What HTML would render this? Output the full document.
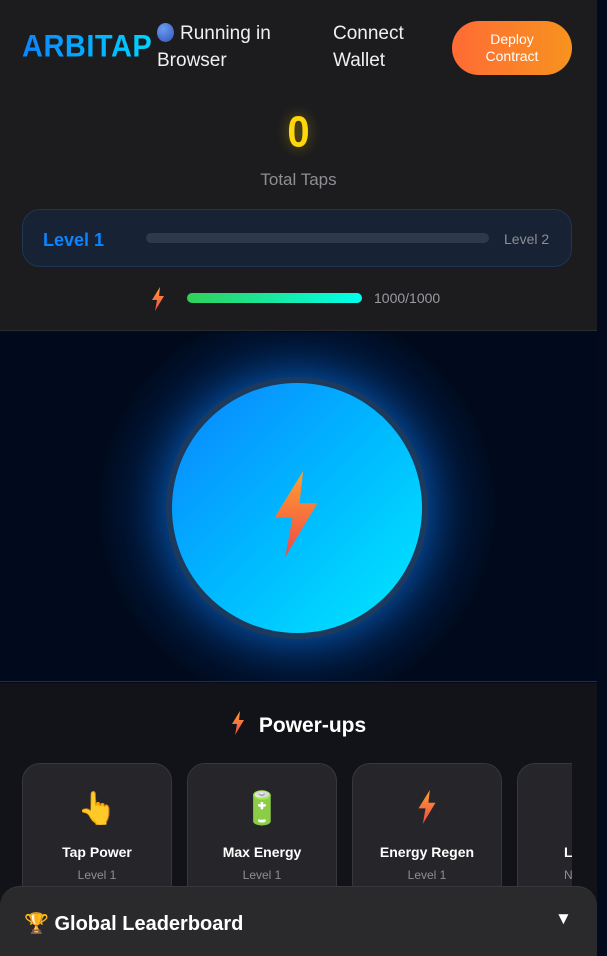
<!DOCTYPE html>
<html><head><style>
*{margin:0;padding:0;box-sizing:border-box}
body{width:607px;height:956px;overflow:hidden;background:#020a1c;font-family:"Liberation Sans","DejaVu Sans",sans-serif;color:#fff;position:relative}
.top{position:absolute;left:0;top:0;width:597px;height:331px;background:#1c1c1e;border-bottom:1px solid #2c2c30}
.logo{position:absolute;left:22px;top:29px;font-size:29px;font-weight:900;letter-spacing:0.5px;background:linear-gradient(90deg,#0a84ff,#00d4ff);-webkit-background-clip:text;color:transparent;transform:scaleY(1.1);transform-origin:left top}
.run{position:absolute;left:157px;top:20px;font-size:19px;line-height:27px;width:150px;color:#f0f0f0}
.dot{display:inline-block;width:17px;height:19px;border-radius:50%;background:radial-gradient(circle at 35% 30%,#6a9cf0,#3355bb);vertical-align:-3px;margin-right:6px}
.cw{position:absolute;left:333px;top:20px;font-size:19px;line-height:27px;color:#f0f0f0}
.dep{position:absolute;left:452px;top:21px;width:120px;height:54px;border-radius:27px;background:linear-gradient(90deg,#ff6b35,#f7931e);font-size:14px;line-height:17px;text-align:center;padding-top:10px}
.zero{position:absolute;left:0;width:597px;top:110px;text-align:center;font-size:40px;font-weight:900;color:#ffd60a;text-shadow:0 0 12px rgba(255,214,10,.4);transform:scaleY(1.1)}
.tt{position:absolute;left:0;width:597px;top:170px;text-align:center;font-size:17px;color:#8e8e93}
.lvl{position:absolute;left:22px;top:209px;width:550px;height:58px;border-radius:18px;background:#172234;border:1px solid #1e3556}
.lvl .a{position:absolute;left:20px;top:20px;font-size:18px;font-weight:bold;color:#0a84ff}
.lvl .bar{position:absolute;left:123px;top:23px;width:343px;height:10px;border-radius:5px;background:#2e3a4c}
.lvl .b{position:absolute;left:481px;top:21px;font-size:14px;color:#8e8e93}
.en{position:absolute;left:187px;top:293px;width:175px;height:10px;border-radius:5px;background:linear-gradient(90deg,#30d158,#00ffee)}
.ent{position:absolute;left:374px;top:290px;font-size:14px;color:#9a9aa0}
.mid{position:absolute;left:0;top:332px;width:597px;height:350px;background:radial-gradient(circle at 297px 175px,rgba(10,132,255,.5) 0,rgba(10,100,220,.22) 140px,rgba(0,10,30,0) 200px),#000a1c;border-bottom:1px solid #2a2d35}
.ring{position:absolute;left:166px;top:45px;width:262px;height:262px;border-radius:50%;background:#1b3a5e;box-shadow:0 0 40px rgba(10,132,255,.55)}
.btn{position:absolute;left:6px;top:6px;width:250px;height:250px;border-radius:50%;background:linear-gradient(135deg,#0a84ff 0%,#00b8ff 50%,#00eaff 100%)}
.pu{position:absolute;left:0;top:683px;width:597px;height:273px;background:#111318}
.put{position:absolute;left:0;width:597px;top:28px;text-align:center;font-size:21px;font-weight:bold}
.card{position:absolute;top:80px;width:150px;height:140px;border-radius:18px;background:#26262a;border:1px solid #38383c;text-align:center}
.card .i{position:absolute;left:0;width:100%;top:26px;font-size:32px;line-height:36px}
.card .n{position:absolute;left:0;width:100%;top:80px;font-size:14px;font-weight:bold}
.card .l{position:absolute;left:0;width:100%;top:104px;font-size:12px;color:#8e8e93}
.lb{position:absolute;left:0;top:886px;width:597px;height:70px;border-radius:20px 20px 0 0;background:#2a2a2d;border-top:1px solid #38383c}
.lb .t{position:absolute;left:24px;top:24px;font-size:20px;font-weight:bold}
.lb .v{position:absolute;left:555px;top:22px;font-size:17px}
.sb{position:absolute;left:597px;top:0;width:10px;height:956px;background:#020a1c}
</style></head><body>
<svg width="0" height="0" style="position:absolute"><defs><linearGradient id="bg" x1="0" y1="0" x2="0" y2="1"><stop offset="0" stop-color="#ffa030"/><stop offset="1" stop-color="#f04848"/></linearGradient></defs></svg>
<div class="top">
<div class="logo">ARBITAP</div>
<div class="run"><span class="dot"></span>Running in Browser</div>
<div class="cw">Connect<br>Wallet</div>
<div class="dep">Deploy<br>Contract</div>
<div class="zero">0</div>
<div class="tt">Total Taps</div>
<div class="lvl"><div class="a">Level 1</div><div class="bar"></div><div class="b">Level 2</div></div>
<svg style="position:absolute;left:151px;top:287px" width="14" height="24" viewBox="0 0 14 24"><path d="M9 0 L1 13 H6 L4 24 L13 9 H8 Z" fill="url(#bg)"/></svg>
<div class="en"></div><div class="ent">1000/1000</div>
</div>
<div class="mid"><div class="ring"><div class="btn">
<svg style="position:absolute;left:99px;top:88px" width="50" height="86" viewBox="0 0 14 24"><path d="M9 0 L1 13 H6 L4 24 L13 9 H8 Z" fill="url(#bg)"/></svg>
</div></div></div>
<div class="pu">
<div class="put"><svg style="vertical-align:-3px;margin-right:14px" width="14" height="24" viewBox="0 0 14 24"><path d="M9 0 L1 13 H6 L4 24 L13 9 H8 Z" fill="url(#bg)"/></svg>Power-ups</div>
<div class="card" style="left:22px"><div class="i">👆</div><div class="n">Tap Power</div><div class="l">Level 1</div></div>
<div class="card" style="left:187px"><div class="i">🔋</div><div class="n">Max Energy</div><div class="l">Level 1</div></div>
<div class="card" style="left:352px"><div class="i"><svg width="20" height="34" viewBox="0 0 14 24"><path d="M9 0 L1 13 H6 L4 24 L13 9 H8 Z" fill="url(#bg)"/></svg></div><div class="n">Energy Regen</div><div class="l">Level 1</div></div>
<div style="position:absolute;left:517px;top:80px;width:55px;height:140px;overflow:hidden"><div class="card" style="left:0;top:0;text-align:left"><div class="n" style="left:46px">Lottery</div><div class="l" style="left:46px">New</div></div></div>
</div>
<div class="lb"><div class="t">🏆 Global Leaderboard</div><div class="v">▼</div></div>
<div class="sb"></div>
</body></html>
